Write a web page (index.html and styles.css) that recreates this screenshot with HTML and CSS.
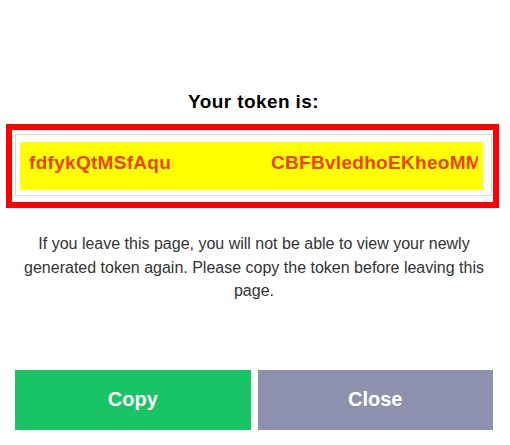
FILE: index.html
```html
<!DOCTYPE html>
<html>
<head>
<meta charset="utf-8">
<link rel="stylesheet" href="styles.css">
</head>
<body>
<div class="modal">
  <h2 class="title">Your token is:</h2>
  <div class="token-frame">
    <div class="token-box">
      <div class="token-field">
        <span class="token-left">fdfykQtMSfAqu</span>
        <span class="token-right">CBFBvledhoEKheoMM</span>
      </div>
    </div>
  </div>
  <p class="notice">If you leave this page, you will not be able to view your newly generated token again. Please copy the token before leaving this page.</p>
  <div class="actions">
    <button class="btn btn-copy">Copy</button>
    <button class="btn btn-close">Close</button>
  </div>
</div>
</body>
</html>
```
FILE: styles.css
```css
html, body {
  margin: 0;
  padding: 0;
  background: #ffffff;
}
body {
  font-family: "Liberation Sans", Arial, sans-serif;
  width: 510px;
  height: 445px;
  overflow: hidden;
}
.modal {
  display: flex;
  flex-direction: column;
  padding-top: 91px;
}
.title {
  margin: 0;
  font-size: 19px;
  letter-spacing: 0.4px;
  line-height: 22px;
  font-weight: bold;
  color: #000;
  text-align: center;
  padding-right: 3px;
}
.token-frame {
  margin: 11px 11px 0 6px;
  border: 6px solid #ff0000;
  padding: 4px 0 6px 3px;
}
.token-box {
  border: 1px solid #dddddd;
  margin-right: 1px;
  padding: 7px 8px 5px 4px;
}
.token-field {
  background: #ffff00;
  height: 48px;
  display: flex;
  padding: 0 5px 0 9px;
  box-sizing: border-box;
  font-size: 19px;
  letter-spacing: 0.3px;
  font-weight: bold;
  line-height: 42px;
  color: #ee3f16;
  white-space: nowrap;
}
.token-left {
  width: 142px;
  overflow: hidden;
  flex: none;
}
.token-right {
  margin-left: 100px;
  flex: 1;
  overflow: hidden;
}
.notice {
  margin: 24px 17px 0 15px;
  font-size: 16px;
  line-height: 23.5px;
  color: #333333;
  text-align: center;
}
.actions {
  display: flex;
  gap: 7px;
  margin: 67px 17px 0 15px;
}
.btn {
  flex: 1;
  height: 60px;
  border: 0;
  padding: 0;
  font-family: "Liberation Sans", Arial, sans-serif;
  font-size: 20px;
  font-weight: bold;
  color: #ffffff;
}
.btn-copy {
  background: #18c463;
}
.btn-close {
  background: #8e91ad;
}
```
